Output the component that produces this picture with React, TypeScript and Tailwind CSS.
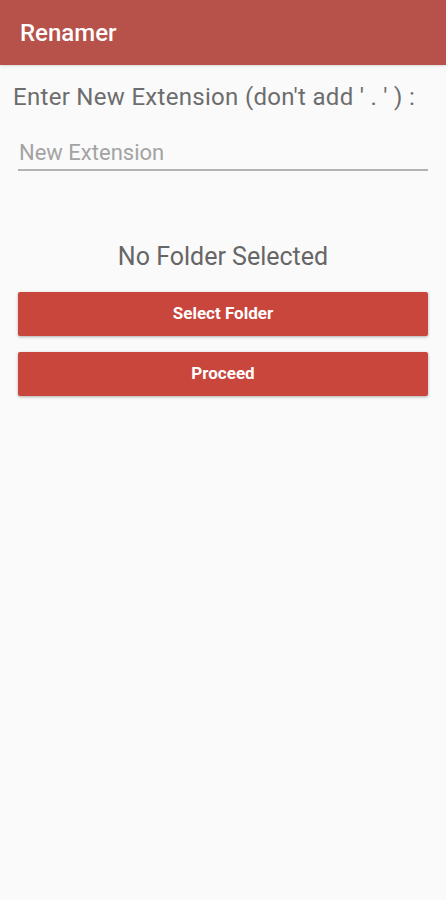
import React, { useState } from 'react'

export default function App() {
  const [extension, setExtension] = useState('')

  return (
    <div className="min-h-screen w-full bg-[#fafafa]" style={{ fontFamily: 'Roboto, "Noto Sans", sans-serif' }}>
      {/* App Bar */}
      <div className="h-[65px] bg-[#b6524a] flex items-center px-5 shadow-sm">
        <h1 className="text-[24px] font-medium text-white leading-none">Renamer</h1>
      </div>

      {/* Content */}
      <div className="flex flex-col">
        <p className="pl-[13px] pt-[18px] text-[24px] tracking-[0.3px] leading-[28px] text-[#6d6d6d] whitespace-nowrap">
          Enter New Extension (don't add ' . ' ) :
        </p>

        <div className="mx-[18px] mt-[28px]">
          <input
            type="text"
            placeholder="New Extension"
            value={extension}
            onChange={(e) => setExtension(e.target.value)}
            className="w-full bg-transparent pl-px pb-[2px] text-[22px] leading-[28px] text-[#444] placeholder:text-[#a3a3a3] border-b-2 border-[#b3b3b3] outline-none"
          />
        </div>

        <p className="mt-[71px] text-center text-[25px] leading-[30px] text-[#666]">No Folder Selected</p>

        <div className="mx-[18px] mt-[20px] flex flex-col gap-[16px]">
          <button className="h-[44px] rounded-[2px] bg-[#c9463d] text-white text-[17px] font-bold shadow-[0_1px_3px_rgba(0,0,0,0.3)]">
            Select Folder
          </button>
          <button className="h-[44px] rounded-[2px] bg-[#c9463d] text-white text-[17px] font-bold shadow-[0_1px_3px_rgba(0,0,0,0.3)]">
            Proceed
          </button>
        </div>
      </div>
    </div>
  )
}
